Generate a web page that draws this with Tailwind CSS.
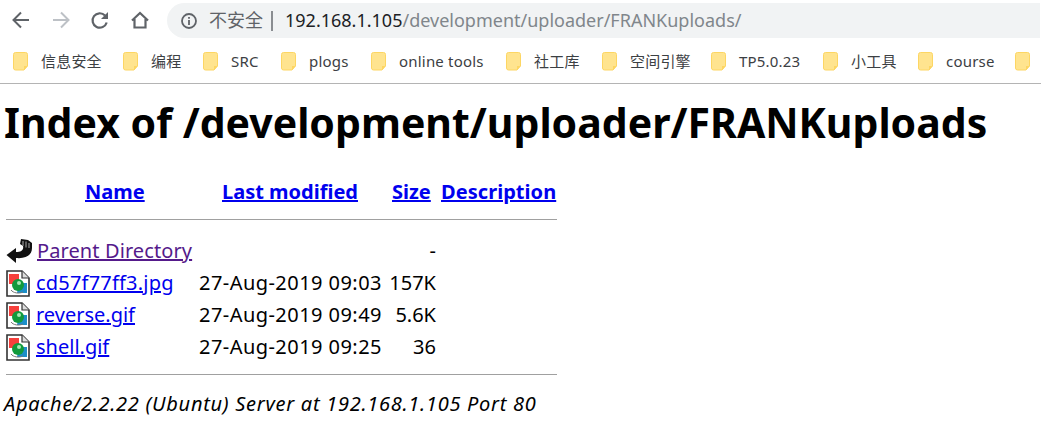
<!doctype html>
<html><head><meta charset="utf-8"><script src="https://cdn.jsdelivr.net/npm/@tailwindcss/browser@4"></script></head>
<body class="w-[1041px] h-[431px] overflow-hidden bg-white font-['Noto_Sans','Noto_Sans_CJK_SC',sans-serif] text-black">
<svg class="hidden"><defs>
  <symbol id="fd" viewBox="0 0 16 19"><path d="M2.500.5h10a2 2 0 0 1 2 2V14l-3.500 4H2.500a2 2 0 0 1-2-2V2.500a2 2 0 0 1 2-2z" fill="#ffe48f" stroke="#fdd663"/><path d="M11 18v-4h3.500z" fill="#fdd663"/></symbol>
  <symbol id="im" viewBox="0 0 24 27"><path d="M1 1h15l7 7v18H1z" fill="#fff" stroke="#333" stroke-width="1.600"/><path d="M16 1v7h7" fill="#ddd" stroke="#333" stroke-width="1.200"/><path d="M3 4h10v10H3z" fill="#f6403c"/><path d="M13 13h8v10H11z" fill="#1c8fc8"/><circle cx="12" cy="15" r="6" fill="#119a3c"/><circle cx="13" cy="13" r="2" fill="#a6e8b4"/><path d="M5 20c2 3 8 4 12 2" fill="none" stroke="#777" stroke-width="1"/></symbol>
</defs></svg>
<div class="h-[84px] border-b border-[#b4b4b4] flex flex-col">
  <div class="h-[35px] flex items-center mt-[3px] pl-[10px]">
    <svg class="w-[22px] h-[22px] mr-[18px] -mt-[1px]" viewBox="0 0 22 22" fill="none" stroke="#5f6368" stroke-width="2"><path d="M19 11H4M11 3.500 3.500 11l7.500 7.500"/></svg>
    <svg class="w-[22px] h-[22px] mr-[18px] -mt-[1px]" viewBox="0 0 22 22" fill="none" stroke="#bdc1c6" stroke-width="2"><path d="M3 11h15M11 3.500 18.500 11 11 18.500"/></svg>
    <svg class="w-[20px] h-[20px] mr-[20px] -mt-[1px]" viewBox="0 0 20 20" fill="none" stroke="#5f6368" stroke-width="2.200"><path d="M16.700 12.500a7.200 7.200 0 1 1-1.700-7"/><path d="M18 2v7h-7z" fill="#5f6368" stroke="none"/></svg>
    <svg class="w-[20px] h-[20px] mr-[17px] -mt-[1px]" viewBox="0 0 20 20" fill="none" stroke="#5f6368" stroke-width="2.200"><path d="M2 10.500 10 3l8 7.500M4.500 9v8.500h11V9"/></svg>
    <div class="w-[873px] h-[35px] rounded-l-full bg-[#f1f3f4] flex items-center pl-[13px] text-[18px] text-[#5f6368] leading-none whitespace-nowrap">
      <svg class="w-[18px] h-[18px] mr-[11px]" viewBox="0 0 18 18" fill="none" stroke="#5f6368" stroke-width="1.800"><circle cx="9" cy="9" r="7"/><path d="M9 8v5M9 5v1.800"/></svg>
      <span class="-mt-[1px]">不安全</span><span class="w-[2px] h-[20px] bg-[#8a8d91] ml-[8px] mr-[12px]"></span>
      <span class="text-[#202124] -mt-[1px]">192.168.1.105</span><span class="text-[#80868b] -mt-[1px]">/development/uploader/FRANKuploads/</span>
    </div>
  </div>
  <div class="h-[46px] flex items-center text-[15px] tracking-[0.2px] text-[#3c4043] whitespace-nowrap pl-[13px] pt-[2px]">
    <div class="w-[110px] flex items-center"><svg class="w-[16px] h-[19px] mr-[12px]"><use href="#fd"/></svg><span>信息安全</span></div>
    <div class="w-[80px] flex items-center"><svg class="w-[16px] h-[19px] mr-[12px]"><use href="#fd"/></svg><span>编程</span></div>
    <div class="w-[78px] flex items-center"><svg class="w-[16px] h-[19px] mr-[12px]"><use href="#fd"/></svg><span>SRC</span></div>
    <div class="w-[90px] flex items-center"><svg class="w-[16px] h-[19px] mr-[12px]"><use href="#fd"/></svg><span>plogs</span></div>
    <div class="w-[135px] flex items-center"><svg class="w-[16px] h-[19px] mr-[12px]"><use href="#fd"/></svg><span>online tools</span></div>
    <div class="w-[96px] flex items-center"><svg class="w-[16px] h-[19px] mr-[12px]"><use href="#fd"/></svg><span>社工库</span></div>
    <div class="w-[109px] flex items-center"><svg class="w-[16px] h-[19px] mr-[12px]"><use href="#fd"/></svg><span>空间引擎</span></div>
    <div class="w-[112px] flex items-center"><svg class="w-[16px] h-[19px] mr-[12px]"><use href="#fd"/></svg><span>TP5.0.23</span></div>
    <div class="w-[95px] flex items-center"><svg class="w-[16px] h-[19px] mr-[12px]"><use href="#fd"/></svg><span>小工具</span></div>
    <div class="w-[97px] flex items-center"><svg class="w-[16px] h-[19px] mr-[12px]"><use href="#fd"/></svg><span>course</span></div>
    <svg class="w-[16px] h-[19px]"><use href="#fd"/></svg>
  </div>
</div>
<h1 class="text-[41px] font-bold leading-none ml-[4px] mt-[18px] whitespace-nowrap">Index of /development/uploader/FRANKuploads</h1>
<div class="ml-[6px] mt-[35px] w-[551px] text-[20px]">
  <div class="flex font-bold underline text-[#0000ee] leading-[28px] h-[28px]">
    <span class="w-[216px] pl-[79px]">Name</span><span class="w-[170px]">Last modified</span><span class="w-[49px]">Size</span><span class="tracking-[0.05px]">Description</span>
  </div>
  <div class="h-[1px] bg-[#a0a0a0] mt-[13px]"></div>
  <div class="mt-[15px] leading-[32px]">
    <div class="flex h-[32px] items-center">
      <svg class="w-[26px] h-[26px] mr-[5px]" viewBox="0 0 26 26"><path d="M.5 17 10 10v4c5 0 8-2 7-6l-3-2 1-5 7 1 4 3v5c0 7-6 11-16 10v5z" fill="#111"/><path d="M17 3v5M20 3.500v6M23 5v5" stroke="#aaa" stroke-width="1"/></svg>
      <a class="w-[162px] underline text-[#551a8b] whitespace-nowrap tracking-[0.1px]">Parent Directory</a><span class="w-[183px]"></span><span class="w-[54px] text-right">-</span>
    </div>
    <div class="flex h-[32px] items-center">
      <svg class="w-[24px] h-[27px] mr-[6px]"><use href="#im"/></svg>
      <a class="w-[163px] underline text-[#0000ee] whitespace-nowrap tracking-[0.2px]">cd57f77ff3.jpg</a><span class="w-[183px] whitespace-nowrap tracking-[0.45px]">27-Aug-2019 09:03</span><span class="w-[54px] text-right">157K</span>
    </div>
    <div class="flex h-[32px] items-center">
      <svg class="w-[24px] h-[27px] mr-[6px]"><use href="#im"/></svg>
      <a class="w-[163px] underline text-[#0000ee] whitespace-nowrap">reverse.gif</a><span class="w-[183px] whitespace-nowrap tracking-[0.45px]">27-Aug-2019 09:49</span><span class="w-[54px] text-right">5.6K</span>
    </div>
    <div class="flex h-[32px] items-center">
      <svg class="w-[24px] h-[27px] mr-[6px]"><use href="#im"/></svg>
      <a class="w-[163px] underline text-[#0000ee] whitespace-nowrap">shell.gif</a><span class="w-[183px] whitespace-nowrap tracking-[0.45px]">27-Aug-2019 09:25</span><span class="w-[54px] text-right">36</span>
    </div>
  </div>
  <div class="h-[1px] bg-[#a0a0a0] mt-[11px]"></div>
</div>
<address class="ml-[4px] mt-[15px] text-[20px] italic leading-[28px] whitespace-nowrap tracking-[0.72px]">Apache/2.2.22 (Ubuntu) Server at 192.168.1.105 Port 80</address>
</body></html>
